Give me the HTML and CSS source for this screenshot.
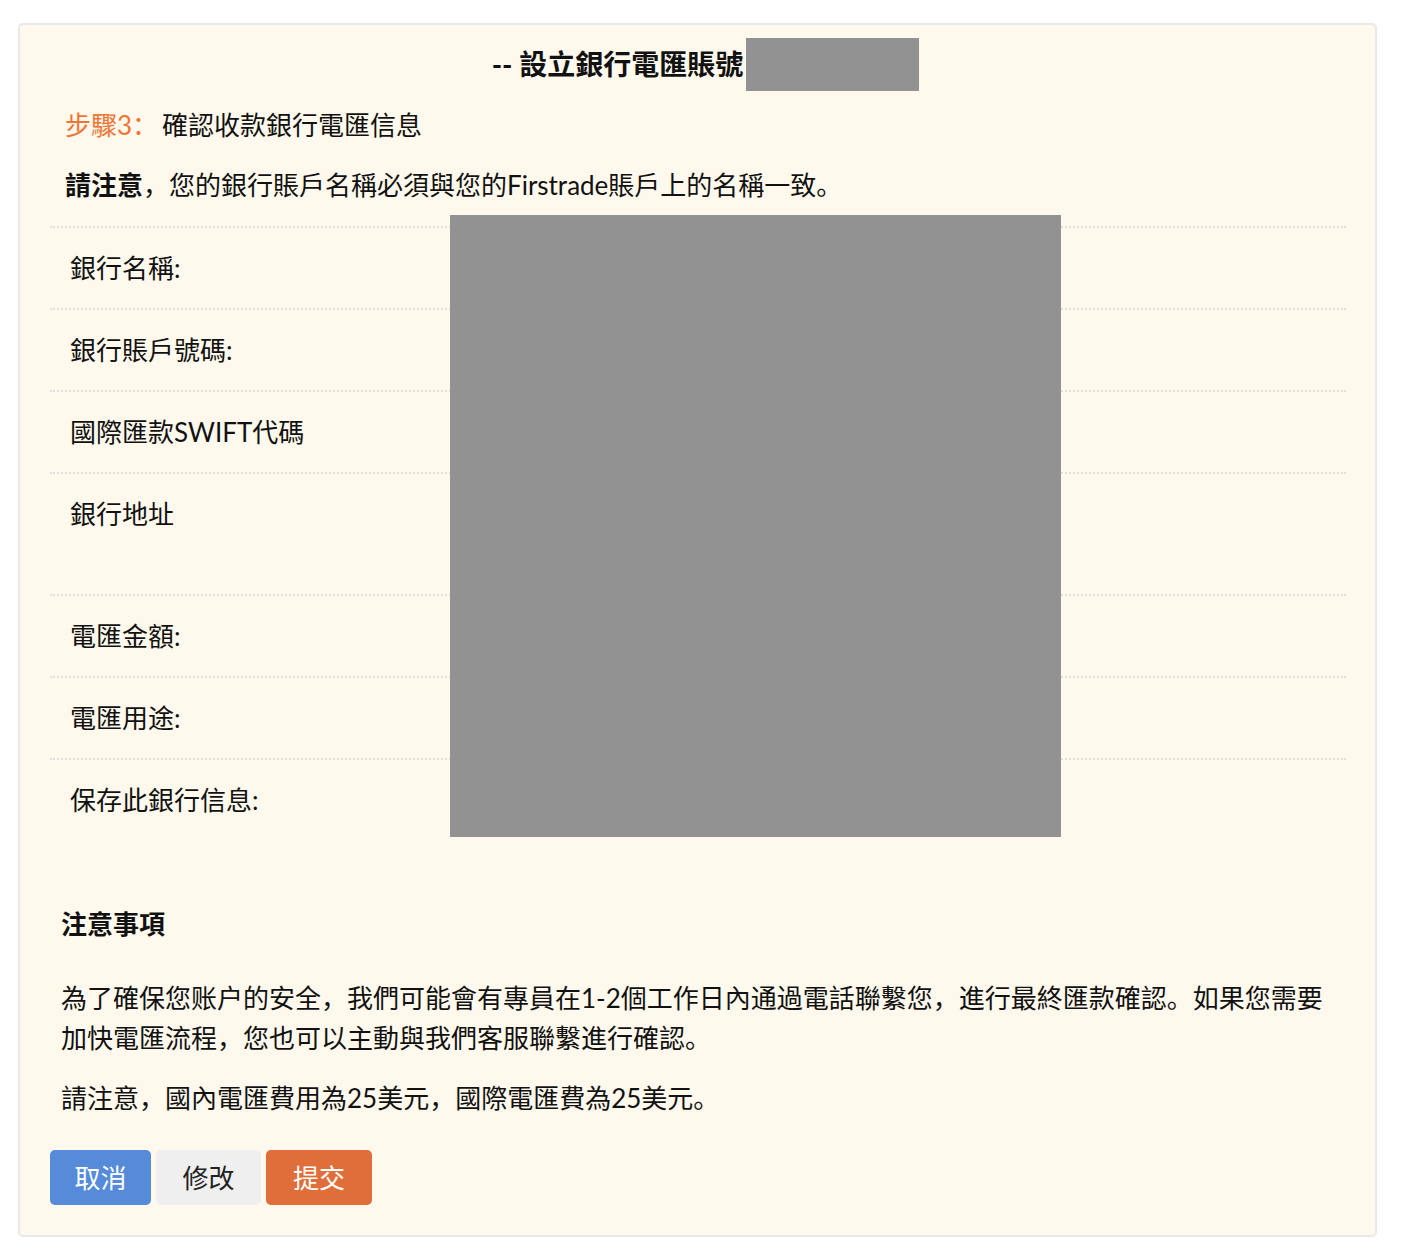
FILE: index.html
```html
<!DOCTYPE html>
<html lang="zh">
  <head>
    <meta charset="UTF-8" />
    <meta name="viewport" content="width=device-width, initial-scale=1.0" />
    <title>設立銀行電匯賬號</title>
    <link rel="stylesheet" href="styles.css">
  </head>
  <body>
    <div class="card">
      <h2 class="title">-- 設立銀行電匯賬號<span class="redact redact-acct"></span></h2>
      <p class="step"><span class="step-no">步驟3：</span>確認收款銀行電匯信息</p>
      <p class="notice"><b>請注意</b>，您的銀行賬戶名稱必須與您的Firstrade賬戶上的名稱一致。</p>
      <div class="confirm">
        <div class="row"><div class="label">銀行名稱:</div></div>
        <div class="row"><div class="label">銀行賬戶號碼:</div></div>
        <div class="row"><div class="label">國際匯款SWIFT代碼</div></div>
        <div class="row row-tall"><div class="label">銀行地址</div></div>
        <div class="row"><div class="label">電匯金額:</div></div>
        <div class="row"><div class="label">電匯用途:</div></div>
        <div class="row"><div class="label">保存此銀行信息:</div></div>
        <div class="redact redact-values"></div>
      </div>
      <div class="notes">
        <h3>注意事項</h3>
        <p>為了確保您账户的安全，我們可能會有專員在1-2個工作日內通過電話聯繫您，進行最終匯款確認。如果您需要加快電匯流程，您也可以主動與我們客服聯繫進行確認。</p>
        <p>請注意，國內電匯費用為25美元，國際電匯費為25美元。</p>
      </div>
      <div class="actions">
        <button class="btn btn-cancel">取消</button>
        <button class="btn btn-edit">修改</button>
        <button class="btn btn-submit">提交</button>
      </div>
    </div>
  </body>
</html>
```

FILE: styles.css
```css
:root {
  --bg: #fef9ec;
  --text: #111;
  --orange: #f07535;
  --font: Lato, 'Noto Sans CJK SC', sans-serif;
}
html, body {
  margin: 0;
  background: #fff;
  font-family: var(--font);
  color: var(--text);
}
.card {
  margin: 23px 25px 13px 18px;
  background: var(--bg);
  border: 2px solid #e9e9e9;
  border-radius: 5px;
  padding: 13px 29px 30px 30px;
}
.title {
  margin: 0;
  padding-left: 15px;
  text-align: center;
  font-size: 28px;
  font-weight: 700;
  line-height: 53px;
}
.redact { background: #929292; }
.title .redact-acct {
  display: inline-block;
  width: 173px;
  height: 53px;
  margin-left: 3px;
  vertical-align: top;
}
.step, .notice {
  margin: 0;
  padding-left: 15px;
  font-size: 26px;
  line-height: 40px;
}
.step { margin-top: 14px; }
.notice { margin-top: 20px; }
.step-no { color: var(--orange); margin-right: 4px; }
.confirm {
  position: relative;
  margin-top: 21px;
}
.row {
  border-top: 2px dotted #e0e0e0;
  height: 80px;
}
.row-tall { height: 120px; }
.label {
  padding: 20px 20px;
  font-size: 26px;
  line-height: 40px;
}
.redact-values {
  position: absolute;
  top: -11px;
  left: 400px;
  width: 611px;
  height: 622px;
}
.notes {
  padding: 0 11px;
  margin-top: 64px;
}
.notes h3 {
  margin: 0 0 34px;
  font-size: 26px;
  font-weight: 700;
  line-height: 40px;
}
.notes p {
  margin: 0 0 20px;
  font-size: 26px;
  line-height: 40px;
}
.actions {
  display: flex;
  gap: 5px;
  margin-top: 32px;
}
.btn {
  height: 55px;
  padding: 0 24.5px 3px;
  border: 0;
  border-radius: 5px;
  font-family: var(--font);
  font-size: 26px;
}
.btn-cancel { background: #558bd9; color: #fff; }
.btn-edit { background: #efefef; color: #222; padding: 0 26.5px 3px; }
.btn-submit { background: #e06e3a; color: #fff; padding: 0 27px 3px; }
```
